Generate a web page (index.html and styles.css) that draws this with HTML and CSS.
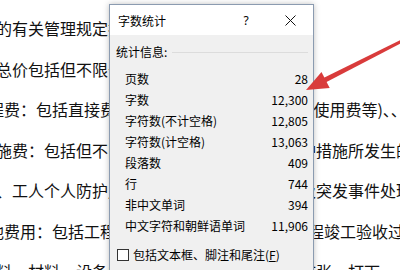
FILE: index.html
```html
<!DOCTYPE html>
<html lang="zh-CN">
<head>
  <meta charset="UTF-8">
  <meta name="viewport" content="width=device-width, initial-scale=1.0">
  <title>字数统计</title>
  <link rel="stylesheet" href="styles.css">
</head>
<body>

<div class="doc">
  <p>的有关管理规定执行，并承担相应责任。</p>
  <p>总价包括但不限于以下内容：</p>
  <p class="cut">程费：包括直接费、间接费、利润和税金等项(使用费等)、、</p>
  <p>施费：包括但不限于安全文明施工、环境保护措施所发生的费用</p>
  <p>、工人个人防护用品、施工现场的安全防护及突发事件处理费用</p>
  <p class="cut">他费用：包括工程保险费、检测费及其他至工程竣工验收过程</p>
  <p>料、材料、设备的采购、运输、保管及损耗扩张、打下</p>
</div>

<div class="dialog">
  <div class="titlebar">
    <span class="title">字数统计</span>
    <span class="help">?</span>
    <span class="close">
      <svg width="11" height="11" viewBox="0 0 11 11">
        <path d="M0.5 0.5 L10.5 10.5 M10.5 0.5 L0.5 10.5" stroke="#111" stroke-width="1"/>
      </svg>
    </span>
  </div>
  <div class="dialog-body">
    <div class="section-head">统计信息:</div>
    <div class="stats">
      <div class="stat-row"><span>页数</span><span>28</span></div>
      <div class="stat-row"><span>字数</span><span>12,300</span></div>
      <div class="stat-row"><span>字符数(不计空格)</span><span>12,805</span></div>
      <div class="stat-row"><span>字符数(计空格)</span><span>13,063</span></div>
      <div class="stat-row"><span>段落数</span><span>409</span></div>
      <div class="stat-row"><span>行</span><span>744</span></div>
      <div class="stat-row"><span>非中文单词</span><span>394</span></div>
      <div class="stat-row"><span>中文字符和朝鲜语单词</span><span>11,906</span></div>
    </div>
    <label class="check-row">
      <span class="checkbox"></span>
      <span>包括文本框、脚注和尾注(<u>F</u>)</span>
    </label>
  </div>
</div>

<!-- red pointer drawn over the screenshot -->
<svg class="arrow" width="400" height="270" viewBox="0 0 400 270">
  <polygon points="321.9,78.8 403.3,38.7 404.7,41.3 324.1,83.2" fill="#d93b3b"/>
  <polygon points="306,90 321.5,72 329.7,88" fill="#d93b3b"/>
</svg>

</body>
</html>
```

FILE: styles.css
```css
body {
  margin: 0;
  background: #fff;
  overflow: hidden;
  font-family: "Noto Sans CJK SC", "Noto Sans", sans-serif;
}
.doc {
  padding-top: 8px;
  margin-left: -4px;
  font-size: 16px;
  line-height: 40.5px;
  color: #111;
  white-space: nowrap;
}
.doc p {
  margin: 0;
}
.doc .cut {
  margin-left: -8px;
}
.dialog {
  position: absolute;
  left: 109px;
  top: 4px;
  width: 203px;
  height: 290px;
  border: 1px solid #8b9bb0;
  background: #f0f0f0;
  box-shadow: 0 0 6px rgba(0, 0, 0, 0.25);
  font-size: 12px;
  color: #000;
}
.titlebar {
  display: flex;
  align-items: center;
  height: 30px;
  background: #fff;
}
.title {
  flex: 1;
  padding-left: 8px;
}
.help {
  width: 42px;
  text-align: center;
  font-family: "Noto Sans", sans-serif;
  font-size: 12px;
}
.close {
  width: 46px;
  display: flex;
  justify-content: center;
  align-items: center;
}
.close svg {
  display: block;
}
.dialog-body {
  padding: 9px 5px 0 6px;
}
.section-head {
  display: flex;
  align-items: center;
  gap: 5px;
  line-height: 16px;
}
.section-head::after {
  content: "";
  flex: 1;
  height: 1px;
  background: #dcdcdc;
}
.stats {
  margin: 8px 0 0 9px;
}
.stat-row {
  display: flex;
  justify-content: space-between;
  align-items: center;
  height: 21px;
}
.check-row {
  display: flex;
  align-items: center;
  gap: 4px;
  margin-top: 11px;
  line-height: 16px;
}
.checkbox {
  width: 10px;
  height: 10px;
  margin-left: 1px;
  border: 1px solid #333;
  background: #fff;
}
.arrow {
  position: absolute;
  left: 0;
  top: 0;
  pointer-events: none;
}
```
